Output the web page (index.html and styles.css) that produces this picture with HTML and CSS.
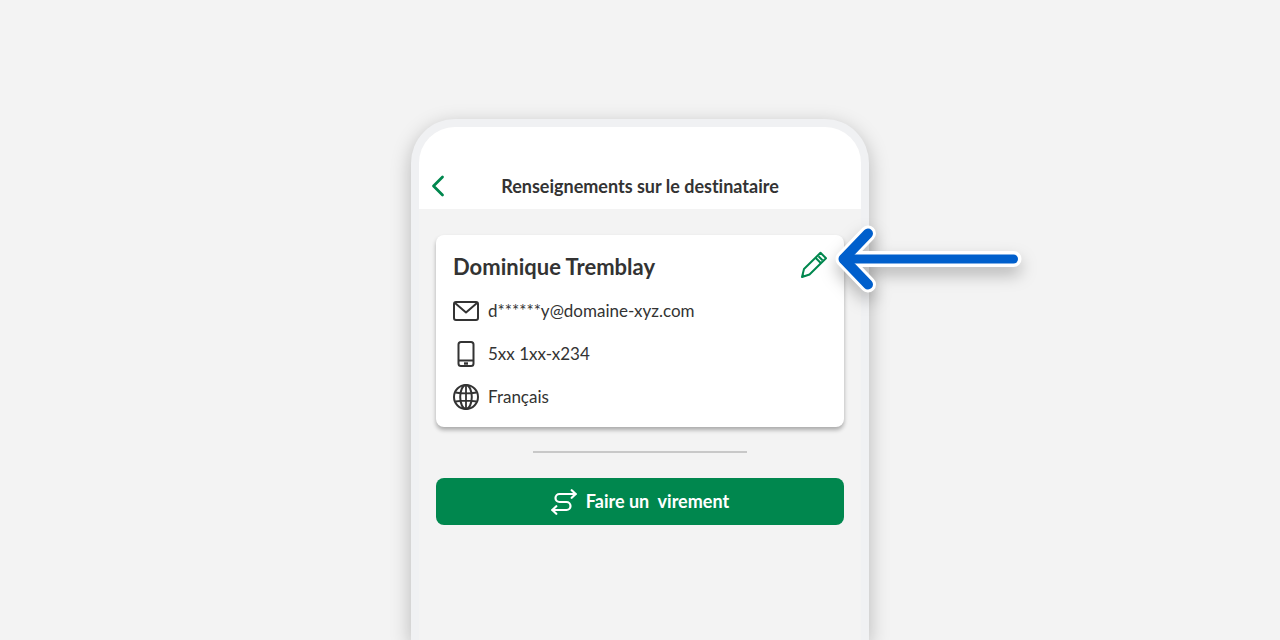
FILE: index.html
```html
<!DOCTYPE html>
<html lang="fr">
<head>
  <meta charset="UTF-8">
  <meta name="viewport" content="width=device-width, initial-scale=1.0">
  <title>Renseignements sur le destinataire</title>
  <link rel="stylesheet" href="styles.css">
</head>

<body>

  <div class="phone">
    <header class="topbar">
      <button type="button" class="icon-btn" aria-label="Retour">
        <svg width="14" height="22" viewBox="0 0 14 22" fill="none" stroke="#00874e" stroke-width="2.8" stroke-linecap="round" stroke-linejoin="round">
          <path d="M11.500 2 2.500 11l9 9"/>
        </svg>
      </button>
      <h1>Renseignements sur le destinataire</h1>
    </header>

    <main class="content">
      <section class="card">
        <div class="card-head">
          <h2>Dominique Tremblay</h2>
          <button type="button" class="icon-btn" aria-label="Modifier">
            <svg width="28" height="28" viewBox="0 0 28 28" fill="none" stroke="#00874e" stroke-width="2" stroke-linejoin="round">
              <path d="M3 26 5 18 21.500 1.800 27 7.300 10.500 23.500Z"/>
              <path d="M16.500 6.700l5.500 5.500M19.500 5.200l4 4"/>
              <path d="M2.500 26.500l1-4 3.200 3z" fill="#00874e" stroke="none"/>
            </svg>
          </button>
        </div>

        <ul class="details">
          <li>
            <svg width="26" height="26" viewBox="0 0 26 26" fill="none" stroke="#333" stroke-width="2" stroke-linecap="round" stroke-linejoin="round">
              <rect x="1" y="4" width="24" height="18" rx="2"/>
              <path d="M2 5l11 9.500L24 5"/>
            </svg>
            <span>d******y@domaine-xyz.com</span>
          </li>
          <li>
            <svg width="26" height="26" viewBox="0 0 26 26" fill="none" stroke="#333" stroke-width="2">
              <rect x="5.500" y="1" width="15" height="24" rx="2.500"/>
              <path d="M5.500 19.500h15"/>
              <path d="M11 22.500h4" stroke-width="2.400"/>
            </svg>
            <span>5xx 1xx-x234</span>
          </li>
          <li>
            <svg width="26" height="26" viewBox="0 0 26 26" fill="none" stroke="#333" stroke-width="2">
              <circle cx="13" cy="13" r="12"/>
              <ellipse cx="13" cy="13" rx="5.800" ry="12"/>
              <path d="M13 1v24M2.500 8.500q10.500 1.800 21 0M2.500 17.500q10.500-1.800 21 0" stroke-width="1.800"/>
            </svg>
            <span>Français</span>
          </li>
        </ul>
      </section>

      <hr class="divider">

      <button type="button" class="transfer-btn">
        <svg width="26" height="26" viewBox="0 0 26 26" fill="none" stroke="#fff" stroke-width="2.2" stroke-linecap="round" stroke-linejoin="round">
          <path d="M24.500 5H8.500a4 4 0 0 0 0 8h7a4 4 0 0 1 0 8H1.500"/>
          <path d="M20.700 1.200l4 3.800-4 3.800M5.300 17.200 1.300 21l4 3.800"/>
        </svg>
        <span>Faire un&nbsp; virement</span>
      </button>
    </main>

    <!-- Arrow pointing at the edit button -->
    <svg class="arrow" width="190" height="70" viewBox="0 0 190 70" fill="none" stroke-linecap="round" stroke-linejoin="round" aria-hidden="true">
      <path class="arrow-outline" d="M37 9.500 12.500 35 37 60.500M12.500 35h170"/>
      <path class="arrow-shaft" d="M12.500 35h170"/>
      <path class="arrow-head" d="M37 9.500 12.500 35 37 60.500"/>
    </svg>
  </div>

</body>

</html>
```

FILE: styles.css
```css
/* General Styles */
* {
  box-sizing: border-box;
}

body {
  font-family: Lato, "Liberation Sans", sans-serif;
  font-variant-ligatures: none;
  background-color: #f3f3f3;
  color: #333;
  margin: 0;
  padding: 119px 20px 0;
  min-height: 100vh;
  display: flex;
  justify-content: center;
  overflow-x: hidden;
}

h1,
h2 {
  margin: 0;
  font-weight: 700;
}

button {
  font-family: inherit;
  border: none;
  cursor: pointer;
}

svg {
  display: block;
  flex-shrink: 0;
}

.icon-btn {
  background: none;
  padding: 0;
}

/* Phone Styles */
.phone {
  position: relative;
  width: 100%;
  max-width: 458px;
  border: 8px solid #f0f1f3;
  border-bottom: none;
  border-radius: 44px 44px 0 0;
  background-color: #f3f3f3;
  box-shadow: 0 6px 20px rgba(0, 0, 0, 0.25);
}

.topbar {
  display: grid;
  grid-template-columns: 14px 1fr 14px;
  align-items: center;
  padding: 48px 12px 12px;
  background-color: #fff;
  border-radius: 36px 36px 0 0;
}

.topbar h1 {
  font-size: 18px;
  line-height: 22px;
  text-align: center;
}

/* Content Styles */
.content {
  padding: 26px 17px;
}

.card {
  background-color: #fff;
  border-radius: 8px;
  padding: 16px 17px 17px;
  box-shadow: 0 3px 4px rgba(0, 0, 0, 0.3);
}

.card-head {
  display: flex;
  justify-content: space-between;
  align-items: flex-start;
}

.card h2 {
  font-size: 22px;
  line-height: 32px;
}

.details {
  list-style: none;
  margin: 15px 0 0;
  padding: 0;
  display: grid;
  gap: 17px;
}

.details li {
  display: flex;
  align-items: center;
  gap: 9px;
  font-size: 17px;
  line-height: 24px;
}

.divider {
  width: 214px;
  height: 2px;
  margin: 24px auto 25px;
  border: none;
  background-color: #c8c8c8;
}

.transfer-btn {
  display: flex;
  justify-content: center;
  align-items: center;
  gap: 9px;
  width: 100%;
  padding: 10px;
  border-radius: 8px;
  background-color: #00874e;
  color: #fff;
  font-size: 18px;
  font-weight: 700;
  line-height: 27px;
}

/* Arrow Styles */
.arrow {
  position: absolute;
  top: 97px;
  left: 412px;
  overflow: visible;
  filter: drop-shadow(0 8px 8px rgba(0, 0, 0, 0.25));
}

.arrow-outline {
  stroke: #fff;
  stroke-width: 16px;
}

.arrow-shaft {
  stroke: #005fcc;
  stroke-width: 9px;
}

.arrow-head {
  stroke: #005fcc;
  stroke-width: 10px;
}
```
